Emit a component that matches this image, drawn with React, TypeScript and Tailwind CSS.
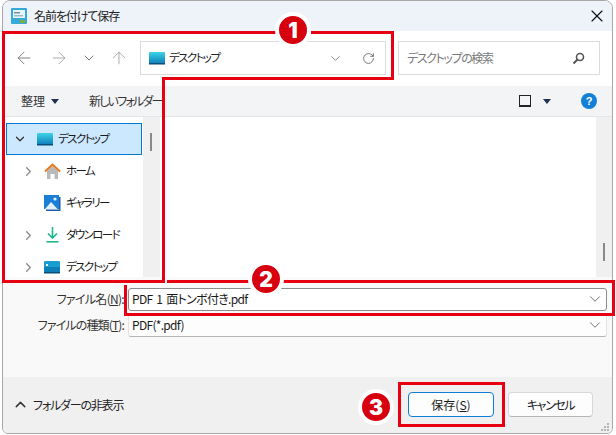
import React from "react";
import { ArrowLeft, ArrowRight, ArrowUp, ChevronDown, ChevronRight, ChevronUp, RotateCw, X } from "lucide-react";

const FONT = "font-['Noto_Sans_CJK_JP','Noto_Sans',sans-serif] [font-feature-settings:'palt']";

const FolderIcon = ({ className = "" }: { className?: string }) => (
  <svg width="16" height="13" viewBox="0 0 16 13" className={className}>
    <defs>
      <linearGradient id="desk" x1="0" y1="0" x2="0" y2="1">
        <stop offset="0" stopColor="#3fd3e6" />
        <stop offset="1" stopColor="#0a7cb8" />
      </linearGradient>
    </defs>
    <rect x="0" y="0" width="16" height="12" rx="1" fill="url(#desk)" />
    <rect x="0" y="11" width="16" height="1.5" fill="#0b4f7d" />
  </svg>
);

const HomeIcon = () => (
  <svg width="17" height="16" viewBox="0 0 17 16">
    <path d="M3 8 L8.5 3 L14 8 V16 H10.5 V11 H6.5 V16 H3 Z" fill="#b9b9b9" />
    <path d="M1 8.5 L8.5 1.5 L16 8.5" fill="none" stroke="#e8761d" strokeWidth="2" />
  </svg>
);

const GalleryIcon = () => (
  <svg width="17" height="16" viewBox="0 0 17 16">
    <rect x="0" y="0" width="15" height="14" fill="#1a7fd6" />
    <path d="M15 2 H16.5 V16 H2 V14.5 H15 Z" fill="#1d5fa8" />
    <path d="M1 14 L7 7 L13.5 14 Z" fill="#e4f0fb" />
    <circle cx="11" cy="4" r="1.6" fill="#dff0ff" />
  </svg>
);

const DownloadIcon = () => (
  <svg width="13" height="16" viewBox="0 0 13 16">
    <path d="M6.5 0 V10 M2 6.5 L6.5 11 L11 6.5" fill="none" stroke="#1fb58f" strokeWidth="1.6" />
    <rect x="0.5" y="14" width="12" height="1.6" fill="#1fb58f" />
  </svg>
);

const DesktopIcon = () => (
  <svg width="16" height="13" viewBox="0 0 16 13">
    <rect x="0" y="0" width="16" height="12" rx="1" fill="#1a9ecf" />
    <rect x="0" y="6" width="16" height="6" fill="#0e7fb5" />
    <rect x="2" y="3" width="2" height="2" fill="#e8f7ff" />
    <rect x="0" y="11" width="16" height="1.5" fill="#0b4f7d" />
  </svg>
);

const TreeRow = ({
  label,
  icon,
  arrow,
}: {
  label: string;
  icon: React.ReactNode;
  arrow: boolean;
}) => (
  <div className="flex h-[32px] items-center">
    <div className="flex w-[39px] justify-end pr-[6px]">
      {arrow && <ChevronRight size={15} strokeWidth={2} className="text-[#8a8a8a]" />}
    </div>
    <div className="flex w-[20px] justify-center">{icon}</div>
    <span className="ml-[4px] text-[11.5px] tracking-[-1.6px] text-[#1a1a1a]">{label}</span>
  </div>
);

const Badge = ({ n, className }: { n: string; className: string }) => (
  <div
    className={`absolute flex h-[36px] w-[36px] items-center justify-center rounded-full border-[4px] border-white bg-[#d7000f] text-[21px] leading-none font-black text-white font-['Inter','Liberation_Sans',sans-serif] ${className}`}
  >
    {n}
  </div>
);

const Red = ({ className }: { className: string }) => (
  <div className={`absolute bg-[#e60012] ${className}`} />
);

const Field = ({
  label,
  value,
  strong,
  labelClass,
}: {
  label: React.ReactNode;
  value: string;
  strong?: boolean;
  labelClass: string;
}) => (
  <div className="flex h-[24px] items-center">
    <div className={`w-[125px] pr-[4px] text-right text-[12px] text-[#333] ${labelClass}`}>{label}</div>
    <div
      className={`flex h-[23px] w-[479px] items-center justify-between rounded-[3px] border pr-[2px] pl-[3px] text-[12px] tracking-[-0.7px] [word-spacing:2px] text-[#1a1a1a] ${
        strong ? "border-[#8d8d8d] bg-white" : "border-[#e3e3e3] border-b-[#b5b5b5] bg-[#fdfdfd]"
      }`}
    >
      <span>{value}</span>
      <ChevronDown size={18} strokeWidth={1} className="text-[#444]" />
    </div>
  </div>
);

export default function App() {
  return (
    <div className={`relative h-[435px] w-[616px] overflow-hidden bg-white ${FONT}`}>
      <div className="ml-[2px] flex h-[434px] w-[611px] flex-col overflow-hidden rounded-t-[8px] rounded-b-[6px] border border-[#a8a8a8]">
        {/* title bar */}
        <div className="flex h-[30px] items-center justify-between bg-[#eef3f9] pr-[5px] pl-[8px]">
          <div className="flex items-center gap-[7px]">
            <svg width="16" height="16" viewBox="0 0 16 16">
              <rect width="16" height="16" rx="1" fill="#36a9d8" />
              <rect x="2" y="2" width="12" height="8" fill="#eaf6fb" />
              <rect x="3" y="4" width="6" height="1.5" fill="#6b8fa3" />
              <rect x="3" y="7" width="9" height="1.5" fill="#9db7c4" />
              <rect x="9" y="12" width="5" height="3" fill="#7fb13a" />
            </svg>
            <span className="text-[12px] tracking-[-1.1px] text-[#222]">名前を付けて保存</span>
          </div>
          <X size={20} strokeWidth={1.4} className="text-[#111]" />
        </div>

        {/* address row */}
        <div className="flex h-[55px] items-center bg-white pb-[1px] pl-[11px]">
          <ArrowLeft size={20} strokeWidth={1.1} className="text-[#777]" />
          <ArrowRight size={20} strokeWidth={1.1} className="ml-[15px] text-[#a5a5a5]" />
          <ChevronDown size={16} strokeWidth={1.5} className="ml-[12px] text-[#777]" />
          <ArrowUp size={20} strokeWidth={1.1} className="ml-[12px] text-[#a5a5a5]" />
          <div className="ml-[11px] flex h-[34px] w-[246px] items-center border border-[#dcdcdc] pr-[10px] pl-[8px]">
            <FolderIcon />
            <span className="ml-[4px] text-[11.5px] tracking-[-1.6px] text-[#222]">デスクトップ</span>
            <ChevronDown size={15} strokeWidth={1.2} className="mr-[19px] ml-auto text-[#666]" />
            <RotateCw size={13} strokeWidth={1.6} className="text-[#666]" />
          </div>
          <div className="ml-[12px] flex h-[34px] w-[202px] items-center justify-between border border-[#dcdcdc] pr-[14px] pl-[8px]">
            <span className="text-[12px] tracking-[-1.4px] text-[#7a7a7a]">デスクトップの検索</span>
            <svg width="13" height="13" viewBox="0 0 13 13">
              <circle cx="8" cy="5" r="3.5" fill="none" stroke="#555" strokeWidth="1.6" />
              <path d="M5.5 7.5 L1.5 11.5" stroke="#555" strokeWidth="2" />
            </svg>
          </div>
        </div>

        {/* toolbar */}
        <div className="flex h-[31px] items-center border-b border-[#e5e5e5] bg-[#f3f4f6] pr-[15px] pl-[18px]">
          <span className="text-[12px] text-[#333]">整理</span>
          <svg width="8" height="5" viewBox="0 0 8 5" className="ml-[6px]">
            <path d="M0 0 H8 L4 5 Z" fill="#1f3350" />
          </svg>
          <span className="ml-[30px] text-[12px] tracking-[-1.8px] text-[#333]">新しいフォルダー</span>
          <div className="ml-auto h-[12px] w-[12px] border border-[#222] border-b-2" />
          <svg width="8" height="5" viewBox="0 0 8 5" className="ml-[12px]">
            <path d="M0 0 H8 L4 5 Z" fill="#1f3350" />
          </svg>
          <div className="ml-[30px] flex h-[16px] w-[16px] items-center justify-center rounded-full bg-[#1380d8] text-[11px] leading-none font-bold text-white font-['Liberation_Sans',sans-serif]">
            ?
          </div>
        </div>

        {/* tree + file list */}
        <div className="flex h-[160px] bg-white">
          <div className="w-[140px] overflow-hidden pt-[6px]">
            <div className="ml-[3px] flex h-[32px] w-[136px] items-center border border-[#0078d4] bg-[#cce8ff]">
              <ChevronDown size={14} strokeWidth={2.2} className="ml-[6px] text-[#333]" />
              <FolderIcon className="ml-[10px]" />
              <span className="ml-[5px] text-[11.5px] tracking-[-1.6px] text-[#1a1a1a]">デスクトップ</span>
            </div>
            <TreeRow label="ホーム" icon={<HomeIcon />} arrow />
            <TreeRow label="ギャラリー" icon={<GalleryIcon />} arrow={false} />
            <TreeRow label="ダウンロード" icon={<DownloadIcon />} arrow />
            <TreeRow label="デスクトップ" icon={<DesktopIcon />} arrow />
          </div>
          <div className="w-[17px] bg-[#f0f0f0] pt-[16px] pl-[7px]">
            <div className="h-[18px] w-[2px] bg-[#8a8a8a]" />
          </div>
          <div className="flex-1" />
          <div className="w-[16px] bg-[#f0f0f0] pt-[126px] pl-[7px]">
            <div className="h-[18px] w-[2px] bg-[#8a8a8a]" />
          </div>
        </div>

        {/* file name fields */}
        <div className="flex h-[100px] flex-col gap-[2px] bg-[#f9f9f9] pt-[10px]">
          <Field
            label={
              <>
                ファイル名(<span className="underline">N</span>):
              </>
            }
            labelClass="tracking-[-0.7px]"
            value="PDF 1 面トンボ付き.pdf"
            strong
          />
          <Field
            label={
              <>
                ファイルの種類(<span className="underline">T</span>):
              </>
            }
            labelClass="tracking-[-0.85px]"
            value="PDF(*.pdf)"
          />
        </div>

        {/* footer */}
        <div className="relative flex flex-1 items-center bg-[#f0f0f0] pr-[19px] pb-[1px] pl-[9px]">
          <ChevronUp size={17} strokeWidth={2} className="text-[#333]" />
          <span className="ml-[4px] text-[12px] tracking-[-1.2px] text-[#222]">フォルダーの非表示</span>
          <button className="ml-auto h-[25px] w-[86px] rounded-[4px] border border-[#0f7fd6] bg-[#fdfdfd] text-[12px] leading-none text-[#1a1a1a]">
            保存(<span className="underline">S</span>)
          </button>
          <button className="ml-[14px] h-[25px] w-[85px] rounded-[4px] border border-[#d8d8d8] border-b-[#b5b5b5] bg-[#fdfdfd] text-[12px] tracking-[-1.4px] leading-none text-[#1a1a1a]">
            キャンセル
          </button>
          <svg width="9" height="9" viewBox="0 0 9 9" className="absolute right-[2px] bottom-[1px]">
            <path d="M6 0h2v2H6zM3 3h2v2H3zM6 3h2v2H6zM0 6h2v2H0zM3 6h2v2H3zM6 6h2v2H6z" fill="#b5b5b5" />
          </svg>
        </div>
      </div>

      {/* red annotations */}
      <Red className="top-[31px] left-[2px] h-[3px] w-[275px]" />
      <Red className="top-[31px] left-[311px] h-[3px] w-[83px]" />
      <Red className="top-[31px] left-[2px] h-[252px] w-[3px]" />
      <Red className="top-[31px] left-[391px] h-[49px] w-[3px]" />
      <Red className="top-[77px] left-[162px] h-[3px] w-[232px]" />
      <Red className="top-[77px] left-[162px] h-[206px] w-[3px]" />
      <Red className="top-[280px] left-[2px] h-[3px] w-[163px]" />

      <Red className="top-[280px] left-[167px] h-[3px] w-[83px]" />
      <Red className="top-[280px] left-[283px] h-[3px] w-[332px]" />
      <Red className="top-[285px] left-[124px] h-[31px] w-[3px]" />
      <Red className="top-[280px] left-[612px] h-[36px] w-[3px]" />
      <Red className="top-[313px] left-[124px] h-[3px] w-[491px]" />

      <div className="absolute top-[382px] left-[398px] h-[45px] w-[107px] border-[3px] border-[#e60012]" />

      <Badge n="1" className="top-[12px] left-[275px]" />
      <Badge n="2" className="top-[261px] left-[248px]" />
      <Badge n="3" className="top-[389px] left-[358px]" />
    </div>
  );
}
